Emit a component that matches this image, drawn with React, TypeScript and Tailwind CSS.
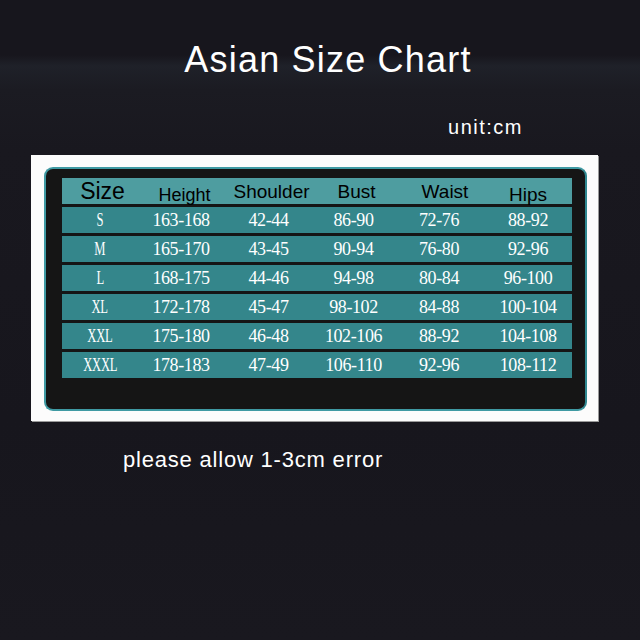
import React from "react";

const rows = [
  ["S", "163-168", "42-44", "86-90", "72-76", "88-92"],
  ["M", "165-170", "43-45", "90-94", "76-80", "92-96"],
  ["L", "168-175", "44-46", "94-98", "80-84", "96-100"],
  ["XL", "172-178", "45-47", "98-102", "84-88", "100-104"],
  ["XXL", "175-180", "46-48", "102-106", "88-92", "104-108"],
  ["XXXL", "178-183", "47-49", "106-110", "92-96", "108-112"],
];

const cols = "grid grid-cols-[78px_85px_88px_85px_86px_88px]";

export default function App() {
  return (
    <div
      className="w-[640px] h-[640px] overflow-hidden flex flex-col bg-[linear-gradient(180deg,#17161d_0px,#17161d_55px,#1f2129_66px,#1b1b22_90px,#19181f_150px,#17161d_420px,#19181f_640px)]"
      style={{ fontFamily: '"Liberation Sans", Arial, sans-serif' }}
    >
      <div className="pt-[42px] pl-[16px] text-center text-white text-[36px] leading-[36px] tracking-[1.2px] h-[78px]">
        Asian Size Chart
      </div>
      <div className="mt-[39px] flex justify-end pr-[117px] text-white text-[20px] leading-[20px] tracking-[1.5px]">
        unit:cm
      </div>
      <div className="mt-[18px] ml-[31px] w-[567px] h-[266px] bg-[#fcfcfc] pt-[12px] pl-[13px] shadow-[1px_1px_0_#9a9a9a]">
        <div className="w-[543px] h-[244px] rounded-[9px] border-2 border-[#3f9aa3] border-r-[#2f8790] bg-[#151515] pt-[9px] pl-[16px]">
          <div className="w-[510px] flex flex-col gap-[3px]">
            <div className={`${cols} h-[26px] bg-[#4e9da0] text-black`}>
              <div className="pt-[2px] pl-[3px] text-center text-[23px] leading-[23px]">Size</div>
              <div className="pt-[8px] pl-[4px] text-center text-[18px] leading-[18px]">Height</div>
              <div className="pt-[4px] pl-[5px] text-center text-[19px] leading-[19px]">Shoulder</div>
              <div className="pt-[4px] pl-[2px] text-center text-[19px] leading-[19px]">Bust</div>
              <div className="pt-[4px] pl-[8px] text-center text-[19px] leading-[19px]">Waist</div>
              <div className="pt-[7px] text-center text-[19px] leading-[19px]">Hips</div>
            </div>
            {rows.map((r) => (
              <div
                key={r[0]}
                className={`${cols} h-[26px] bg-[#34868b] text-white text-[18px] leading-[26px] tracking-[-0.4px]`}
                style={{ fontFamily: '"Liberation Serif", "Times New Roman", serif' }}
              >
                <div className="text-center pr-[2px]">
                  <span className="inline-block scale-x-[0.7]">{r[0]}</span>
                </div>
                <div className="text-center pr-[3px]">{r[1]}</div>
                <div className="text-center pr-[1px]">{r[2]}</div>
                <div className="text-center pr-[4px]">{r[3]}</div>
                <div className="text-center pr-[4px]">{r[4]}</div>
                <div className="text-center">{r[5]}</div>
              </div>
            ))}
          </div>
        </div>
      </div>
      <div className="mt-[28px] pl-[123px] text-white text-[22px] leading-[22px] tracking-[0.8px]">
        please allow 1-3cm error
      </div>
    </div>
  );
}
